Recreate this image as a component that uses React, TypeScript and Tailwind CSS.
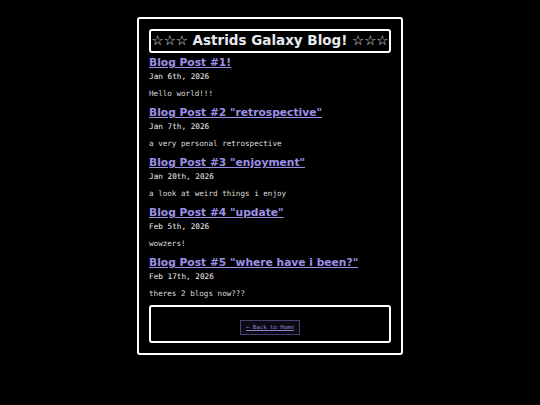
import React from "react";

const posts = [
  { title: "Blog Post #1!", date: "Jan 6th, 2026", body: "Hello world!!!" },
  { title: 'Blog Post #2 "retrospective"', date: "Jan 7th, 2026", body: "a very personal retrospective" },
  { title: 'Blog Post #3 "enjoyment"', date: "Jan 20th, 2026", body: "a look at weird things i enjoy" },
  { title: 'Blog Post #4 "update"', date: "Feb 5th, 2026", body: "wowzers!" },
  { title: 'Blog Post #5 "where have i been?"', date: "Feb 17th, 2026", body: "theres 2 blogs now???" },
];

export default function App() {
  return (
    <div className="w-[540px] h-[405px] bg-black flex justify-center pt-[17px]">
      <div className="w-[266px] h-[338px] border-2 border-white rounded-[3px] p-[10px] flex flex-col">
        <div className="h-[24px] border-2 border-white rounded-[3px] flex items-center justify-center text-[#e8e8f0] font-bold text-[13.5px] leading-none whitespace-nowrap" style={{ fontFamily: '"DejaVu Sans", sans-serif' }}>
          ☆☆☆ Astrids Galaxy Blog! ☆☆☆
        </div>
        <div className="flex flex-col">
          {posts.map((p) => (
            <div key={p.title} className="h-[50px] flex flex-col">
              <a className="mt-[2px] text-[10.7px] leading-[15px] font-bold text-[#9c8fe6] underline underline-offset-[1px] whitespace-nowrap" style={{ fontFamily: '"DejaVu Sans", sans-serif' }}>
                {p.title}
              </a>
              <div className="text-[7.7px] leading-[12px] mt-[1px] text-[#ececec]" style={{ fontFamily: '"DejaVu Sans Mono", monospace' }}>
                {p.date}
              </div>
              <div className="text-[7.6px] leading-[12px] mt-[5px] text-[#dcdcdc]" style={{ fontFamily: '"DejaVu Sans Mono", monospace' }}>
                {p.body}
              </div>
            </div>
          ))}
        </div>
        <div className="mt-[2px] h-[38px] border-2 border-white rounded-[3px] flex items-center justify-center">
          <div className="mt-[7px] h-[15px] px-[5px] border border-[#4a4075] bg-[#0b0914] flex items-center text-[5.7px] text-[#8d82d0] underline" style={{ fontFamily: '"DejaVu Sans Mono", monospace' }}>
            ← Back to Home
          </div>
        </div>
      </div>
    </div>
  );
}
